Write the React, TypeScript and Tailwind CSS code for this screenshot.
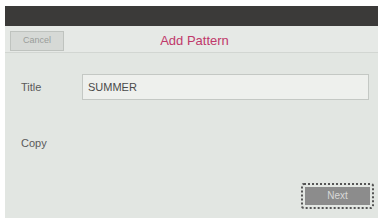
export default function App() {
  return (
    <div className="w-[378px] h-[218px] bg-white pt-[6px] pl-[5px] overflow-hidden" style={{ fontFamily: '"Liberation Sans", Arial, sans-serif' }}>
      <div className="h-[20px] bg-[#3b3a39]" />
      <div className="h-[192px] bg-[#e2e6e2] flex flex-col">
        <div className="h-[27px] flex items-center relative border-b border-[#d2d6d2] bg-[#e6e9e6]">
          <div className="ml-[5px] mt-[3px] w-[54px] h-[20px] border border-[#bfc3bf] bg-[#d6d9d6] text-[9px] text-[#9a9d9a] flex items-center justify-center">Cancel</div>
          <div className="absolute left-0 right-0 top-[3px] bottom-0 flex items-center justify-center pointer-events-none">
            <span className="text-[13px] text-[#c0386a] ml-[6px]">Add Pattern</span>
          </div>
        </div>
        <div className="flex items-center mt-[21px]">
          <span className="ml-[16px] w-[61px] text-[11px] text-[#5a5a5a]">Title</span>
          <div className="w-[287px] h-[26px] border border-[#c4c8c4] bg-[#eef0ed] flex items-center pl-[5px] text-[11px] text-[#4a4a4a]">SUMMER</div>
        </div>
        <div className="ml-[16px] mt-[35px] text-[11px] text-[#5a5a5a]">Copy</div>
        <div className="flex justify-end mr-[4px] mt-[31px]">
          <div className="w-[73px] h-[26px] rounded-[3px] border-2 border-dotted border-[#555] p-[2px]">
            <div className="w-full h-full bg-[#8c8c8c] flex items-center justify-center text-[10px] text-[#d8d8d8]">Next</div>
          </div>
        </div>
      </div>
    </div>
  );
}
